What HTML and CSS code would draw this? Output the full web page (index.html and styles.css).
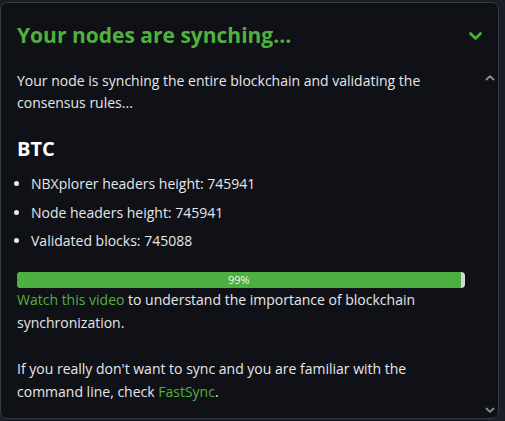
FILE: index.html
```html
<!DOCTYPE html>
<html lang="en">
<head>
<meta charset="utf-8">
<title>Your nodes are synching</title>
<link rel="stylesheet" href="styles.css">
</head>
<body>
<div class="modal">
  <div class="modal-header">
    <h4 class="modal-title">Your nodes are synching...</h4>
    <svg class="toggle" width="13" height="9" viewBox="0 0 13 9" aria-hidden="true"><path d="M1.5 1.5 L6.5 6.5 L11.5 1.5" fill="none" stroke="#51b13e" stroke-width="2.6" stroke-linecap="round" stroke-linejoin="round"/></svg>
  </div>
  <div class="modal-body">
    <p class="intro">Your node is synching the entire blockchain and validating the consensus rules...</p>
    <h5 class="chain">BTC</h5>
    <ul class="stats">
      <li>NBXplorer headers height: 745941</li>
      <li>Node headers height: 745941</li>
      <li>Validated blocks: 745088</li>
    </ul>
    <div class="progress">
      <div class="progress-bar" style="width: 99%">99%</div>
    </div>
    <p class="info"><a href="#">Watch this video</a> to understand the importance of blockchain synchronization.<br><br>If you really don't want to sync and you are familiar with the command line, check <a href="#">FastSync</a>.</p>
    <svg class="scroll-arrow up" width="10" height="6" viewBox="0 0 10 6" aria-hidden="true"><path d="M1.5 4.5 L5 1.2 L8.5 4.5" fill="none" stroke="#8a8f97" stroke-width="1.8" stroke-linecap="round" stroke-linejoin="round"/></svg>
    <svg class="scroll-arrow down" width="10" height="6" viewBox="0 0 10 6" aria-hidden="true"><path d="M1.5 1.5 L5 4.8 L8.5 1.5" fill="none" stroke="#8a8f97" stroke-width="1.8" stroke-linecap="round" stroke-linejoin="round"/></svg>
  </div>
</div>
</body>
</html>
```
FILE: styles.css
```css
html, body {
  margin: 0;
  padding: 0;
}
body {
  background: #1b1f25;
  font-family: "Open Sans", "Liberation Sans", sans-serif;
  color: #e6e7ea;
  font-size: 14px;
  line-height: 1.6;
  width: 505px;
  height: 421px;
  overflow: hidden;
}
.modal {
  position: relative;
  margin-top: 2px;
  width: 499px;
  height: 417px;
  box-sizing: border-box;
  background: #0f1117;
  border: 1px solid #353a42;
  border-radius: 7px;
  display: flex;
  flex-direction: column;
}
.modal-header {
  display: flex;
  align-items: center;
  justify-content: space-between;
  padding: 20px 16px 21.5px 16px;
}
.modal-title {
  margin: 0;
  font-size: 21px;
  line-height: 1.2;
  font-weight: 700;
  color: #51b13e;
}
.toggle {
  display: block;
  margin-top: 1px;
}
.modal-body {
  padding: 0 33px 0 16px;
}
.intro {
  margin: 0 0 23px;
  line-height: 22px;
}
.chain {
  margin: 0 0 12.5px;
  font-size: 20px;
  line-height: 1.2;
  font-weight: 700;
  color: #ffffff;
}
.stats {
  margin: 0 0 19.5px;
  padding-left: 14px;
}
.stats li {
  margin-bottom: 6px;
}
.progress {
  height: 16px;
  background: #d3d7dc;
  border-radius: 4px;
  overflow: hidden;
  display: flex;
}
.progress-bar {
  background: #4caf3f;
  color: #f2f2f2;
  font-size: 11px;
  line-height: 16px;
  text-align: center;
}
.info {
  margin: 0;
  line-height: 23.1px;
}
a {
  color: #51b13e;
  text-decoration: none;
}
.scroll-arrow {
  position: absolute;
  right: 3px;
  display: block;
}
.scroll-arrow.up {
  top: 72px;
}
.scroll-arrow.down {
  bottom: 5px;
}
```
